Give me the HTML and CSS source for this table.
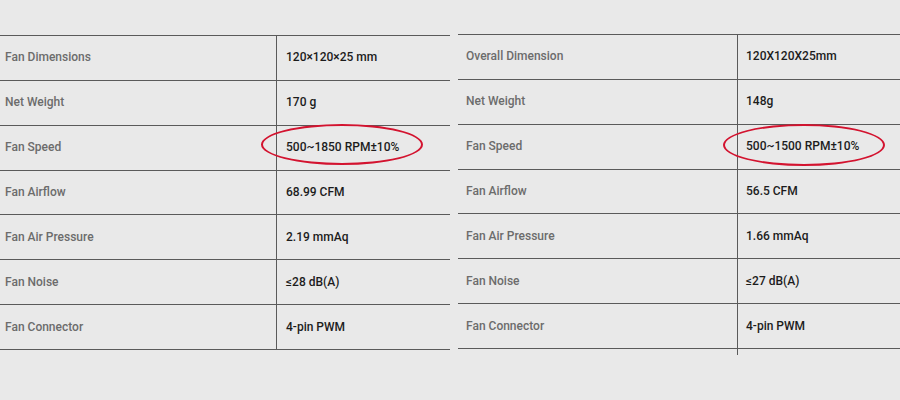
FILE: index.html
```html
<!DOCTYPE html>
<html>
<head>
<meta charset="utf-8">
<link rel="stylesheet" href="styles.css">
</head>
<body>
<div class="page">
  <div class="spec spec-left">
    <div class="row"><div class="k">Fan Dimensions</div><div class="v">120×120×25 mm</div></div>
    <div class="row"><div class="k">Net Weight</div><div class="v">170 g</div></div>
    <div class="row"><div class="k">Fan Speed</div><div class="v mark">500~1850 RPM±10%<span class="ring"></span></div></div>
    <div class="row"><div class="k">Fan Airflow</div><div class="v">68.99 CFM</div></div>
    <div class="row"><div class="k">Fan Air Pressure</div><div class="v">2.19 mmAq</div></div>
    <div class="row"><div class="k">Fan Noise</div><div class="v">≤28 dB(A)</div></div>
    <div class="row"><div class="k">Fan Connector</div><div class="v">4-pin PWM</div></div>
  </div>
  <div class="spec spec-right">
    <div class="row"><div class="k">Overall Dimension</div><div class="v">120X120X25mm</div></div>
    <div class="row"><div class="k">Net Weight</div><div class="v">148g</div></div>
    <div class="row"><div class="k">Fan Speed</div><div class="v mark">500~1500 RPM±10%<span class="ring"></span></div></div>
    <div class="row"><div class="k">Fan Airflow</div><div class="v">56.5 CFM</div></div>
    <div class="row"><div class="k">Fan Air Pressure</div><div class="v">1.66 mmAq</div></div>
    <div class="row"><div class="k">Fan Noise</div><div class="v">≤27 dB(A)</div></div>
    <div class="row"><div class="k">Fan Connector</div><div class="v">4-pin PWM</div></div>
    <div class="tail"></div>
  </div>
</div>
</body>
</html>
```
FILE: styles.css
```css
html, body {
  margin: 0;
  padding: 0;
  background: #e9e9e9;
}
body {
  width: 900px;
  height: 400px;
  overflow: hidden;
  font-family: Roboto, "Liberation Sans", sans-serif;
  font-weight: 500;
  font-size: 12px;
}
.page {
  display: flex;
  align-items: flex-start;
}
.spec {
  border-top: 1px solid #5a5a5a;
}
.spec-left {
  width: 450px;
  margin-top: 35px;
}
.spec-right {
  width: 442px;
  margin-top: 34px;
  margin-left: 8px;
}
.row {
  display: flex;
  height: 43.86px;
  border-bottom: 1px solid #5a5a5a;
}
.k {
  display: flex;
  align-items: center;
  padding-bottom: 1px;
  border-right: 1px solid #5a5a5a;
  color: #6c6c6c;
}
.v {
  display: flex;
  align-items: center;
  padding-bottom: 1px;
  color: #1c1c1c;
  position: relative;
}
.spec-left .k { width: 271px; padding-left: 5px; }
.spec-left .v { padding-left: 9px; }
.spec-right .k { width: 271px; padding-left: 8px; }
.spec-right .v { padding-left: 8px; }
.ring {
  position: absolute;
  width: 158px;
  height: 37px;
  border: 2px solid #d3132f;
  border-radius: 50%;
}
.spec-left .ring { left: -16px; top: -2px; }
.spec-right .ring { left: -15px; top: -1px; height: 38px; }
.tail {
  width: 279px;
  height: 6px;
  border-right: 1px solid #5a5a5a;
}
```
